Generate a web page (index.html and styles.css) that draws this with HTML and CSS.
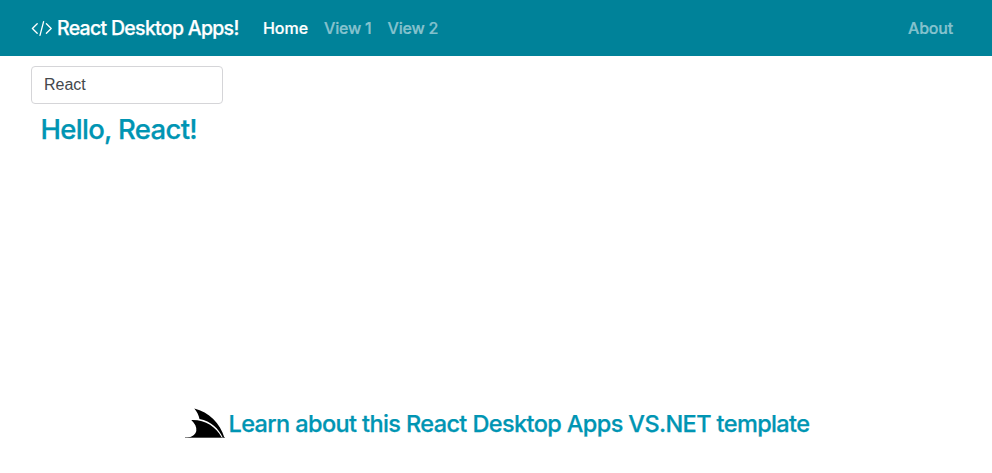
FILE: index.html
```html
<!DOCTYPE html>
<html lang="en">
<head>
<meta charset="utf-8">
<title>React Desktop Apps!</title>
<link rel="stylesheet" href="styles.css">
</head>
<body>
<nav class="navbar">
  <a class="brand">
    <svg class="brand-icon" viewBox="0 0 22 16" width="22" height="16"><path d="M6.2 3.7 1.4 8.500l4.800 4.800M15.400 3.700 20.200 8.500l-4.800 4.800M12.600 1.700 9 15.300"/></svg>
    <span class="brand-text">React Desktop Apps!</span>
  </a>
  <a class="nav-link active">Home</a>
  <a class="nav-link">View 1</a>
  <a class="nav-link">View 2</a>
  <a class="nav-link about">About</a>
</nav>
<main class="content">
  <input class="name-input" type="text" value="React">
  <h3 class="result">Hello, React!</h3>
</main>
<footer class="footer">
  <svg class="logo" viewBox="0 0 40 32" width="40" height="32"><path d="M9.300 1.500C24 5 35 16 39.500 31H38C33.500 21 26 14.500 14.500 12 13.800 8.500 12 4.500 9.300 1.500Z"/><path d="M6.300 13C20 12.500 31 19.500 37 31H2C7 30 10.500 27.500 11.300 24 11.800 20 10 16.500 6.300 13Z"/><path class="logo-base" d="M0 30.200h40v.8H0z"/></svg>
  <a class="learn">Learn about this React Desktop Apps VS.NET template</a>
</footer>
</body>
</html>
```
FILE: styles.css
```css
* { box-sizing: border-box; }
body {
  margin: 0;
  height: 473px;
  display: flex;
  flex-direction: column;
  background: #fff;
  font-family: Inter, "Liberation Sans", sans-serif;
  font-size: 16px;
  line-height: 24px;
}
.navbar {
  display: flex;
  align-items: center;
  height: 56px;
  padding: 0 31px;
  background: #008299;
}
.brand {
  display: flex;
  align-items: center;
  gap: 4px;
  margin-right: 16px;
  color: #fff;
}
.brand-icon {
  fill: none;
  stroke: #fff;
  stroke-width: 1.3;
  stroke-linecap: round;
  stroke-linejoin: round;
}
.brand-text {
  width: 182px;
  white-space: nowrap;
  font-size: 19.5px;
  font-weight: 500;
  letter-spacing: -0.7px;
  -webkit-text-stroke: 0.25px;
}
.nav-link {
  padding: 0 8px;
  color: rgba(255, 255, 255, 0.5);
  font-weight: 500;
  white-space: nowrap;
  letter-spacing: -0.2px;
  -webkit-text-stroke: 0.2px;
}
.nav-link.active { color: #fff; letter-spacing: -0.05px; }
.about { margin-left: auto; }
.content {
  flex: 1;
  padding: 10px 31px;
}
.name-input {
  display: block;
  width: 192px;
  height: 38px;
  padding: 6px 12px;
  border: 1px solid #d5d5d8;
  border-radius: 4px;
  color: #44484c;
  font: 16px/24px "Liberation Sans", Arial, sans-serif;
}
.result {
  margin: 0;
  padding: 9px 10px 0 9.500px;
  color: #0095b3;
  font-size: 27.5px;
  font-weight: 500;
  line-height: 33px;
  letter-spacing: -0.7px;
  -webkit-text-stroke: 0.25px;
}
.footer {
  display: flex;
  height: 66px;
  padding-left: 185px;
  gap: 3.5px;
}
.logo { display: block; }
.logo-base { fill: #666; }
.learn {
  color: #0095b3;
  font-size: 23.5px;
  font-weight: 500;
  line-height: 34px;
  white-space: nowrap;
  letter-spacing: -0.615px;
  -webkit-text-stroke: 0.25px;
}
```
